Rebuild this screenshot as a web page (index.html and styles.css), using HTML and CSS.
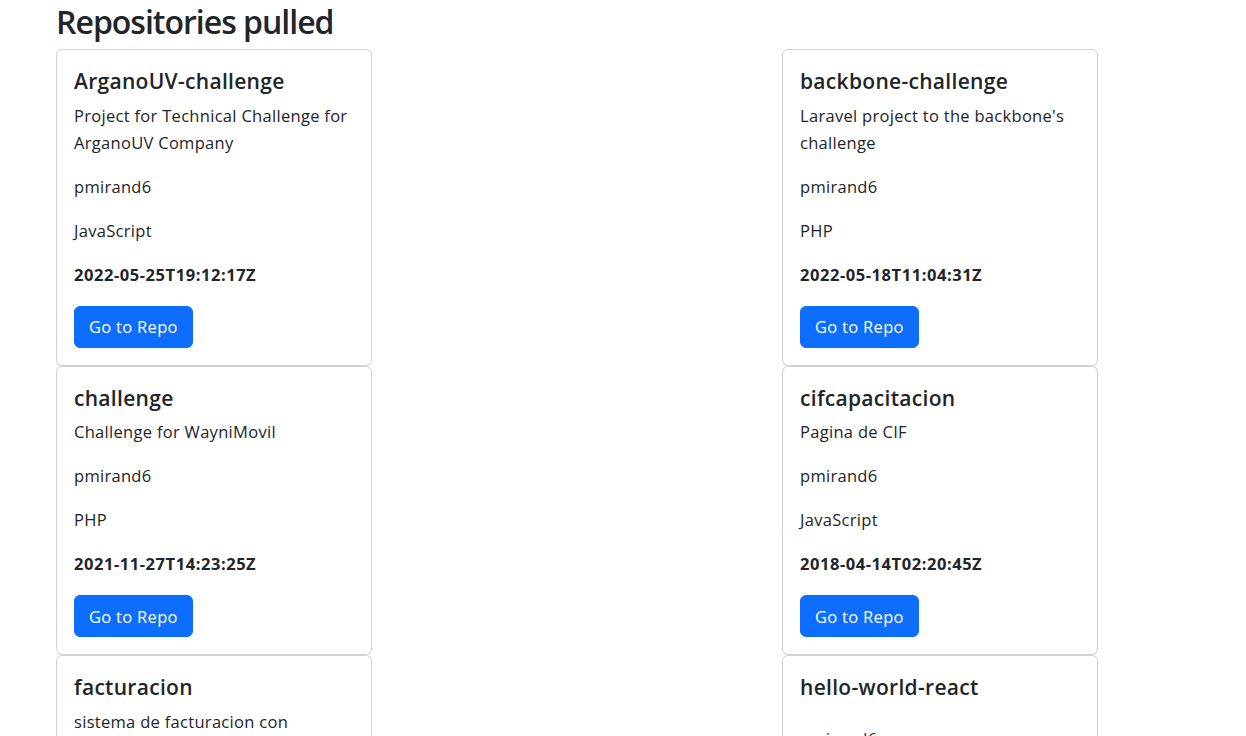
FILE: index.html
```html
<!DOCTYPE html>
<html lang="en">
<head>
<meta charset="utf-8">
<title>Repositories pulled</title>
<link rel="stylesheet" href="styles.css">
</head>
<body>
<main class="page">
  <h2 class="page-title">Repositories pulled</h2>
  <div class="repo-grid">
    <div class="card">
      <h5 class="card-title">ArganoUV-challenge</h5>
      <p class="card-text">Project for Technical Challenge for ArganoUV Company</p>
      <p class="card-text">pmirand6</p>
      <p class="card-text">JavaScript</p>
      <p class="card-text date">2022-05-25T19:12:17Z</p>
      <a class="btn" href="#">Go to Repo</a>
    </div>
    <div class="card">
      <h5 class="card-title">backbone-challenge</h5>
      <p class="card-text">Laravel project to the backbone's challenge</p>
      <p class="card-text">pmirand6</p>
      <p class="card-text">PHP</p>
      <p class="card-text date">2022-05-18T11:04:31Z</p>
      <a class="btn" href="#">Go to Repo</a>
    </div>
    <div class="card">
      <h5 class="card-title">challenge</h5>
      <p class="card-text">Challenge for WayniMovil</p>
      <p class="card-text">pmirand6</p>
      <p class="card-text">PHP</p>
      <p class="card-text date">2021-11-27T14:23:25Z</p>
      <a class="btn" href="#">Go to Repo</a>
    </div>
    <div class="card">
      <h5 class="card-title">cifcapacitacion</h5>
      <p class="card-text">Pagina de CIF</p>
      <p class="card-text">pmirand6</p>
      <p class="card-text">JavaScript</p>
      <p class="card-text date">2018-04-14T02:20:45Z</p>
      <a class="btn" href="#">Go to Repo</a>
    </div>
    <div class="card">
      <h5 class="card-title">facturacion</h5>
      <p class="card-text">sistema de facturacion con CodeIgniter</p>
      <p class="card-text">pmirand6</p>
      <p class="card-text">PHP</p>
      <p class="card-text date">2017-09-12T18:41:03Z</p>
      <a class="btn" href="#">Go to Repo</a>
    </div>
    <div class="card">
      <h5 class="card-title">hello-world-react</h5>
      <p class="card-text"></p>
      <p class="card-text">pmirand6</p>
      <p class="card-text">JavaScript</p>
      <p class="card-text date">2017-06-02T16:10:58Z</p>
      <a class="btn" href="#">Go to Repo</a>
    </div>
  </div>
</main>
</body>
</html>
```

FILE: styles.css
```css
* {
  box-sizing: border-box;
}

body {
  margin: 0;
  background: #ffffff;
  color: #212529;
  font-family: "Open Sans", Roboto, "Liberation Sans", sans-serif;
  font-size: 16.5px;
  line-height: 1.7;
  letter-spacing: 0.3px;
}

.page {
  padding: 3px 56px 0;
}

.page-title {
  margin: 0 0 8px;
  font-size: 32px;
  font-weight: 600;
  line-height: 1.2;
  letter-spacing: -1px;
}

.repo-grid {
  display: grid;
  grid-template-columns: 316px 316px;
  column-gap: 410px;
  align-items: start;
}

.card {
  display: flex;
  flex-direction: column;
  align-items: flex-start;
  border: 1px solid rgba(0, 0, 0, 0.175);
  border-radius: 6px;
  padding: 16px 17px 17px;
  background: #fff;
}

.card-title {
  margin: 0 0 5.5px;
  font-size: 21px;
  font-weight: 600;
  line-height: 30px;
  letter-spacing: 0.3px;
}

.card-text {
  margin: 0 0 17px;
  line-height: 27px;
}

.date {
  font-weight: 700;
  letter-spacing: 0.55px;
}

.btn {
  display: inline-block;
  margin-top: 1px;
  padding: 6.5px 14px;
  border: 1px solid #0d6efd;
  border-radius: 6px;
  background: #0d6efd;
  color: #fff;
  text-decoration: none;
  font-size: 16.5px;
  line-height: 27px;
}
```
